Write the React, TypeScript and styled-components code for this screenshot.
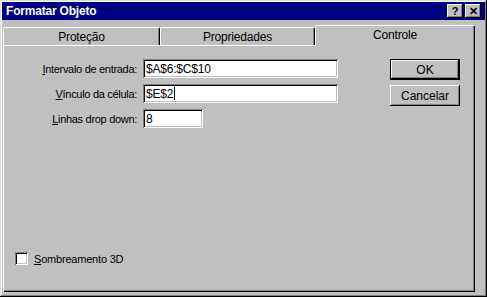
import styled, { createGlobalStyle } from 'styled-components'

const GlobalStyle = createGlobalStyle`
  html, body {
    margin: 0;
    padding: 0;
    background: #c0c0c0;
  }
  * {
    box-sizing: border-box;
  }
`

const Window = styled.div`
  width: 487px;
  height: 297px;
  background: #c0c0c0;
  display: flex;
  flex-direction: column;
  box-shadow: inset -1px -1px #000, inset 1px 1px #dfdfdf, inset -2px -2px #808080, inset 2px 2px #fff;
  font-family: "Liberation Sans", Arial, sans-serif;
  font-size: 11px;
  color: #000;
`

const TitleBar = styled.div`
  margin: 2px 2px 0 2px;
  height: 18px;
  background: #000080;
  display: flex;
  align-items: center;
  justify-content: space-between;
  padding: 0 4px 0 4px;
`

const Title = styled.span`
  color: #fff;
  font-weight: bold;
  font-size: 12px;
  letter-spacing: -0.2px;
`

const CaptionButtons = styled.div`
  display: flex;
  gap: 2px;
`

const CaptionButton = styled.div`
  width: 16px;
  height: 14px;
  background: #c0c0c0;
  box-shadow: inset -1px -1px #000, inset 1px 1px #fff, inset -2px -2px #808080;
  display: flex;
  align-items: center;
  justify-content: center;
  font-weight: bold;
  font-size: 11px;
  line-height: 1;
`

const Body = styled.div`
  flex: 1;
  display: flex;
  flex-direction: column;
  padding: 5px 12px 5px 3px;
`

const TabRow = styled.div`
  display: flex;
  align-items: flex-end;
  height: 20px;
  position: relative;
  z-index: 1;
`

const Tab = styled.div<{ $active?: boolean; $w: number }>`
  width: ${p => p.$w}px;
  height: ${p => (p.$active ? 21 : 18)}px;
  margin-bottom: ${p => (p.$active ? -1 : 0)}px;
  background: #c0c0c0;
  border-top: 1px solid #fff;
  border-left: 1px solid #fff;
  border-right: 1px solid #000;
  box-shadow: inset -1px 0 #808080;
  border-radius: 2px 2px 0 0;
  display: flex;
  align-items: center;
  justify-content: center;
  font-size: 12px;
  letter-spacing: -0.2px;
  padding-bottom: ${p => (p.$active ? 3 : 0)}px;
`

const Panel = styled.div`
  flex: 1;
  display: flex;
  flex-direction: column;
  padding: 14px 15px 10px 0;
  box-shadow: inset 1px 1px #fff, inset -1px -1px #000, inset -2px -2px #808080;
`

const Top = styled.div`
  display: flex;
  justify-content: space-between;
`

const Form = styled.div`
  display: grid;
  grid-template-columns: 134px auto;
  column-gap: 6px;
  row-gap: 6px;
  align-items: center;
`

const Label = styled.label`
  text-align: right;
  white-space: nowrap;
  letter-spacing: -0.3px;
`

const Key = styled.u`
  text-decoration: underline;
`

const Field = styled.div<{ $w: number }>`
  width: ${p => p.$w}px;
  height: 19px;
  background: #fff;
  box-shadow: inset 1px 1px #808080, inset -1px -1px #fff, inset 2px 2px #000, inset -2px -2px #c0c0c0;
  display: flex;
  align-items: center;
  padding: 0 3px;
  font-size: 12px;
  letter-spacing: -0.2px;
`

const Caret = styled.span`
  display: inline-block;
  width: 1px;
  height: 13px;
  background: #000;
  margin-left: 1px;
`

const Buttons = styled.div`
  display: flex;
  flex-direction: column;
  gap: 5px;
`

const Button = styled.div<{ $default?: boolean }>`
  width: 70px;
  height: 21px;
  display: flex;
  align-items: center;
  justify-content: center;
  background: #c0c0c0;
  font-size: 12px;
  box-shadow: ${p =>
    p.$default
      ? 'inset 0 0 0 1px #000, inset -2px -2px #000, inset 2px 2px #fff, inset -3px -3px #808080'
      : 'inset -1px -1px #000, inset 1px 1px #fff, inset -2px -2px #808080'};
`

const CheckRow = styled.div`
  margin-top: auto;
  display: flex;
  align-items: center;
  gap: 6px;
  padding-left: 12px;
  padding-bottom: 17px;
  letter-spacing: -0.2px;
`

const CheckBox = styled.div`
  width: 13px;
  height: 13px;
  background: #fff;
  box-shadow: inset 1px 1px #808080, inset -1px -1px #fff, inset 2px 2px #000, inset -2px -2px #c0c0c0;
`

export default function App() {
  return (
    <>
      <GlobalStyle />
      <Window>
        <TitleBar>
          <Title>Formatar Objeto</Title>
          <CaptionButtons>
            <CaptionButton>?</CaptionButton>
            <CaptionButton>✕</CaptionButton>
          </CaptionButtons>
        </TitleBar>
        <Body>
          <TabRow>
            <Tab $w={157}>Proteção</Tab>
            <Tab $w={155}>Propriedades</Tab>
            <Tab $w={160} $active>Controle</Tab>
          </TabRow>
          <Panel>
            <Top>
              <Form>
                <Label><Key>I</Key>ntervalo de entrada:</Label>
                <Field $w={195}>$A$6:$C$10</Field>
                <Label><Key>V</Key>ínculo da célula:</Label>
                <Field $w={195}>$E$2<Caret /></Field>
                <Label><Key>L</Key>inhas drop down:</Label>
                <Field $w={60}>8</Field>
              </Form>
              <Buttons>
                <Button $default>OK</Button>
                <Button>Cancelar</Button>
              </Buttons>
            </Top>
            <CheckRow>
              <CheckBox />
              <span><Key>S</Key>ombreamento 3D</span>
            </CheckRow>
          </Panel>
        </Body>
      </Window>
    </>
  )
}
